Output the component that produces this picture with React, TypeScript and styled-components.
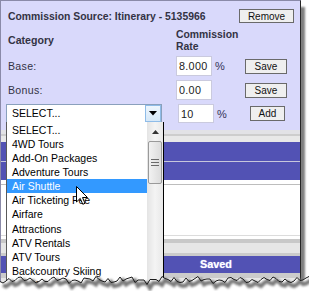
import React from "react";
import styled, { createGlobalStyle } from "styled-components";

const Global = createGlobalStyle`
  html, body { margin: 0; padding: 0; background: #fff; }
  body { font-family: "Liberation Sans", Arial, sans-serif; }
`;

const Stage = styled.div`
  position: relative;
  width: 309px;
  height: 291px;
  overflow: hidden;
  background: #fff;
`;

const Frame = styled.div`
  width: 301px;
  height: 288px;
  box-sizing: border-box;
  border-top: 1px solid #8a8aa8;
  border-left: 1px solid #8a8aa8;
  border-right: 1px solid #262626;
  box-shadow: 4px 7px 2px rgba(0, 0, 0, 0.5);
  background: #e6e6e6;
  display: flex;
  flex-direction: column;
`;

const Form = styled.div`
  background: #d9d9fb;
  padding: 8px 6px 7px 7px;
  color: #333344;
  display: flex;
  flex-direction: column;
`;

const TitleRow = styled.div`
  display: flex;
  align-items: center;
  justify-content: space-between;
  height: 14px;
`;

const Title = styled.span`
  font-weight: bold;
  font-size: 10.4px;
  white-space: nowrap;
`;

const Button = styled.button<{ $w: number; $h?: number }>`
  width: ${(p) => p.$w}px;
  height: ${(p) => p.$h ?? 15}px;
  box-sizing: border-box;
  margin: 0;
  padding: 0;
  border: 1px solid #6a6a6a;
  background: #efefef;
  color: #111;
  font-family: "Liberation Sans", Arial, sans-serif;
  font-size: 10px;
  display: flex;
  align-items: center;
  justify-content: center;
  flex-shrink: 0;
`;

const Row = styled.div<{ $h: number; $mt: number }>`
  display: flex;
  align-items: center;
  height: ${(p) => p.$h}px;
  margin-top: ${(p) => p.$mt}px;
`;

const LabelCell = styled.div<{ $w?: number; $bold?: boolean }>`
  width: ${(p) => p.$w ?? 168}px;
  flex-shrink: 0;
  font-size: 10.6px;
  font-weight: ${(p) => (p.$bold ? "bold" : "normal")};
  letter-spacing: ${(p) => (p.$bold ? "0" : "0.3px")};
  color: #333344;
`;

const HeadStack = styled.div`
  font-size: 10.4px;
  font-weight: bold;
  line-height: 12px;
  align-self: flex-start;
`;

const ValueInput = styled.input<{ $h?: number }>`
  width: 36px;
  height: ${(p) => p.$h ?? 20}px;
  box-sizing: border-box;
  margin: 0;
  padding: 0 0 0 2px;
  border: 1px solid #cacade;
  background: #fff;
  color: #1a1a1a;
  font-family: "Liberation Sans", Arial, sans-serif;
  font-size: 10.8px;
  letter-spacing: 0.3px;
  outline: none;
  flex-shrink: 0;
`;

const Unit = styled.span<{ $w: number }>`
  width: ${(p) => p.$w}px;
  flex-shrink: 0;
  box-sizing: border-box;
  padding-left: 3px;
  font-size: 11px;
  color: #333355;
`;

const SelectBox = styled.div`
  width: 156px;
  height: 19px;
  margin-left: -2px;
  box-sizing: border-box;
  border: 1px solid #8aa0bc;
  background: #fff;
  display: flex;
  align-items: stretch;
  flex-shrink: 0;
`;

const SelectText = styled.span`
  flex: 1;
  padding-left: 5px;
  font-size: 10.5px;
  line-height: 17px;
  color: #000;
`;

const SelectArrow = styled.span`
  width: 16px;
  box-sizing: border-box;
  border: 1px solid #8fbce8;
  background: linear-gradient(#eef6fd, #d6e8f8);
  display: flex;
  align-items: center;
  justify-content: center;
`;

const Stripe = styled.div<{ $h: number; $c: string }>`
  height: ${(p) => p.$h}px;
  background: ${(p) => p.$c};
  flex-shrink: 0;
`;

const PurpleBar = styled.div<{ $h: number }>`
  height: ${(p) => p.$h}px;
  background: #5252b4;
  flex-shrink: 0;
`;

const SavedBar = styled.div`
  height: 17px;
  background: #5252b4;
  color: #fff;
  font-size: 10.8px;
  font-weight: bold;
  line-height: 17px;
  padding-left: 199px;
  text-shadow: 0 0 1px #c8c8ff;
  flex-shrink: 0;
`;

const ListBox = styled.div`
  position: absolute;
  left: 6px;
  top: 122px;
  width: 158px;
  height: 170px;
  box-sizing: border-box;
  border-left: 1px solid #5a5a5a;
  border-right: 1px solid #000;
  background: #fff;
  display: flex;
`;

const Items = styled.div`
  width: 140px;
  display: flex;
  flex-direction: column;
  padding-top: 1px;
`;

const Item = styled.div<{ $active?: boolean }>`
  height: 14.3px;
  line-height: 14.3px;
  padding-left: 5px;
  font-size: 10.5px;
  white-space: nowrap;
  overflow: hidden;
  color: ${(p) => (p.$active ? "#fff" : "#000")};
  background: ${(p) => (p.$active ? "#3399ff" : "transparent")};
`;

const ScrollTrack = styled.div`
  width: 16px;
  background: linear-gradient(90deg, #e4e4e4, #f4f4f4 50%, #e8e8e8);
  display: flex;
  flex-direction: column;
  align-items: center;
`;

const ScrollArrow = styled.div`
  height: 19px;
  width: 16px;
  display: flex;
  align-items: center;
  justify-content: center;
`;

const Thumb = styled.div`
  width: 14px;
  height: 43px;
  box-sizing: border-box;
  border: 1px solid #9a9a9a;
  border-radius: 2px;
  background: linear-gradient(90deg, #f2f2f2, #dcdcdc);
  display: flex;
  align-items: center;
  justify-content: center;
`;

const Overlay = styled.svg<{ $l: number; $t: number }>`
  position: absolute;
  left: ${(p) => p.$l}px;
  top: ${(p) => p.$t}px;
  overflow: visible;
`;

const options = [
  "SELECT...",
  "4WD Tours",
  "Add-On Packages",
  "Adventure Tours",
  "Air Shuttle",
  "Air Ticketing Fee",
  "Airfare",
  "Attractions",
  "ATV Rentals",
  "ATV Tours",
  "Backcountry Skiing",
  "Boat Tours",
];

const jag: [number, number][] = Array.from({ length: 105 }, (_, i) => {
  const x = i * 3;
  const y =
    12 +
    2.0 * Math.sin(i * 1.7) +
    1.4 * Math.sin(i * 0.53 + 1) +
    1.1 * Math.sin(i * 3.1 + 0.4);
  return [x, Math.round(y * 2) / 2];
});
const jagLine = jag.map(([x, y], i) => `${i ? "L" : "M"}${x},${y}`).join(" ");
const jagFill = `${jagLine} L315,30 L0,30 Z`;
const jagShadow = jag
  .map(([x, y], i) => `${i ? "L" : "M"}${x + 3},${y + 3.5}`)
  .join(" ");

export default function App() {
  return (
    <>
      <Global />
      <Stage>
        <Frame>
          <Form>
            <TitleRow>
              <Title>Commission Source: Itinerary - 5135966</Title>
              <Button $w={55} $h={14}>Remove</Button>
            </TitleRow>
            <Row $h={22} $mt={6}>
              <LabelCell $bold>Category</LabelCell>
              <HeadStack>
                Commission
                <br />
                Rate
              </HeadStack>
            </Row>
            <Row $h={20} $mt={5}>
              <LabelCell>Base:</LabelCell>
              <ValueInput readOnly value="8.000" />
              <Unit $w={33}>%</Unit>
              <Button $w={42}>Save</Button>
            </Row>
            <Row $h={20} $mt={4}>
              <LabelCell>Bonus:</LabelCell>
              <ValueInput readOnly value="0.00" />
              <Unit $w={33} />
              <Button $w={42}>Save</Button>
            </Row>
            <Row $h={19} $mt={4}>
              <SelectBox>
                <SelectText>SELECT...</SelectText>
                <SelectArrow>
                  <svg width="8" height="5" viewBox="0 0 8 5">
                    <path d="M0,0 L8,0 L4,4.5 Z" fill="#000" />
                  </svg>
                </SelectArrow>
              </SelectBox>
              <LabelCell $w={16} />
              <ValueInput readOnly value="10" $h={19} />
              <Unit $w={36}>%</Unit>
              <Button $w={35}>Add</Button>
            </Row>
          </Form>
          <Stripe $h={4} $c="#e2e2e6" />
          <Stripe $h={2} $c="#cdcdcd" />
          <Stripe $h={6} $c="#e8e8e8" />
          <PurpleBar $h={19} />
          <Stripe $h={1} $c="#c6c6dc" />
          <PurpleBar $h={18} />
          <Stripe $h={4} $c="#fff" />
          <Stripe $h={1} $c="#bdbdbd" />
          <Stripe $h={50} $c="#fff" />
          <Stripe $h={1} $c="#dcdcdc" />
          <Stripe $h={3} $c="#fff" />
          <Stripe $h={4} $c="#c8c8c8" />
          <Stripe $h={10} $c="#e6e6e6" />
          <Stripe $h={3} $c="#cbcbcb" />
          <SavedBar>Saved</SavedBar>
          <Stripe $h={5} $c="#cbcbcb" />
          <Stripe $h={10} $c="#e6e6e6" />
        </Frame>

        <ListBox>
          <Items>
            {options.map((o) => (
              <Item key={o} $active={o === "Air Shuttle"}>
                {o}
              </Item>
            ))}
          </Items>
          <ScrollTrack>
            <ScrollArrow>
              <svg width="7" height="4" viewBox="0 0 7 4">
                <path d="M0,4 L7,4 L3.5,0 Z" fill="#333" />
              </svg>
            </ScrollArrow>
            <Thumb>
              <svg width="8" height="7" viewBox="0 0 8 7">
                <path d="M0,0.5 H8 M0,3.5 H8 M0,6.5 H8" stroke="#6a6a6a" strokeWidth="1" />
              </svg>
            </Thumb>
          </ScrollTrack>
        </ListBox>

        <Overlay $l={76} $t={186} width="12" height="19" viewBox="0 0 12 19">
          <path
            d="M0.5,0.5 L0.5,16 L4.2,12.4 L6.8,18.3 L9,17.3 L6.5,11.5 L11.5,11.5 Z"
            fill="#fff"
            stroke="#000"
            strokeWidth="1"
            strokeLinejoin="round"
          />
        </Overlay>

        <Overlay $l={0} $t={268} width="309" height="23" viewBox="0 0 309 23">
          <defs>
            <filter id="blur" x="-5%" y="-50%" width="110%" height="200%">
              <feGaussianBlur stdDeviation="1.2" />
            </filter>
          </defs>
          <path d={jagFill} fill="#fff" />
          <path
            d={jagShadow}
            fill="none"
            stroke="#7a7a7a"
            strokeWidth="4"
            filter="url(#blur)"
          />
          <path d={jagLine} fill="none" stroke="#1a1a1a" strokeWidth="1" />
        </Overlay>
      </Stage>
    </>
  );
}
